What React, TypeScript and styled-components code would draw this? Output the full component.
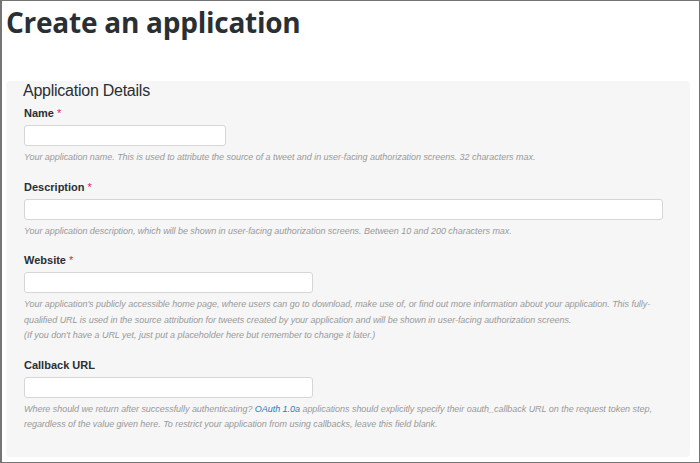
import React from "react";
import styled, { createGlobalStyle } from "styled-components";

const Global = createGlobalStyle`
  html, body { margin: 0; padding: 0; background: #fff; }
  * { box-sizing: border-box; }
`;

const Frame = styled.div`
  width: 700px;
  height: 463px;
  border: 1px solid #757575;
  border-left-width: 2px;
  background: #fff;
  overflow: hidden;
  padding: 3px 9px 0 4px;
  display: flex;
  flex-direction: column;
`;

const Title = styled.h1`
  margin: 0;
  font-family: "Open Sans", "Lato", sans-serif;
  font-weight: 700;
  font-size: 28px;
  line-height: 36px;
  color: #292f33;
  letter-spacing: -0.25px;
`;

const Panel = styled.section`
  margin-top: 41px;
  background: #f6f6f6;
  border-radius: 4px;
  padding: 1px 0 24px 17px;
  font-family: "Liberation Sans", Arial, sans-serif;
`;

const PanelHeading = styled.h2`
  margin: 0 0 7px 0;
  font-weight: 400;
  font-size: 16px;
  line-height: 18px;
  color: #292f33;
  letter-spacing: -0.25px;
`;

const Field = styled.div`
  display: flex;
  flex-direction: column;
  align-items: flex-start;
  padding-left: 1px;
  & + & {
    margin-top: 15px;
  }
`;

const Label = styled.label`
  font-weight: 700;
  font-size: 11px;
  line-height: 13px;
  color: #292f33;
  margin-bottom: 5px;
`;

const Required = styled.span`
  color: #e0245e;
  font-weight: 400;
  margin-left: 3px;
`;

const Input = styled.input<{ $w: number }>`
  width: ${(p) => p.$w}px;
  height: 21px;
  background: #fff;
  border: 1px solid #d6d6d6;
  border-radius: 3px;
  margin: 0 0 4px 0;
  padding: 0 6px;
  outline: none;
`;

const Help = styled.p`
  margin: 0;
  font-style: italic;
  font-size: 9px;
  line-height: 15.5px;
  color: #999;
  white-space: nowrap;
  letter-spacing: -0.04px;
`;

const Link = styled.a`
  color: #2b7bb9;
  text-decoration: none;
`;

export default function App() {
  return (
    <>
      <Global />
      <Frame>
        <Title>Create an application</Title>
        <Panel>
          <PanelHeading>Application Details</PanelHeading>
          <Field>
            <Label>
              Name<Required>*</Required>
            </Label>
            <Input $w={202} />
            <Help>
              Your application name. This is used to attribute the source of a tweet and in user-facing
              authorization screens. 32 characters max.
            </Help>
          </Field>
          <Field>
            <Label>
              Description<Required>*</Required>
            </Label>
            <Input $w={639} />
            <Help>
              Your application description, which will be shown in user-facing authorization screens.
              Between 10 and 200 characters max.
            </Help>
          </Field>
          <Field>
            <Label>
              Website<Required>*</Required>
            </Label>
            <Input $w={289} />
            <Help>
              Your application's publicly accessible home page, where users can go to download, make use
              of, or find out more information about your application. This fully-
              <br />
              qualified URL is used in the source attribution for tweets created by your application and
              will be shown in user-facing authorization screens.
              <br />
              (If you don't have a URL yet, just put a placeholder here but remember to change it later.)
            </Help>
          </Field>
          <Field>
            <Label>Callback URL</Label>
            <Input $w={289} />
            <Help>
              Where should we return after successfully authenticating? <Link href="#">OAuth 1.0a</Link>{" "}
              applications should explicitly specify their oauth_callback URL on the request token step,
              <br />
              regardless of the value given here. To restrict your application from using callbacks, leave
              this field blank.
            </Help>
          </Field>
        </Panel>
      </Frame>
    </>
  );
}
